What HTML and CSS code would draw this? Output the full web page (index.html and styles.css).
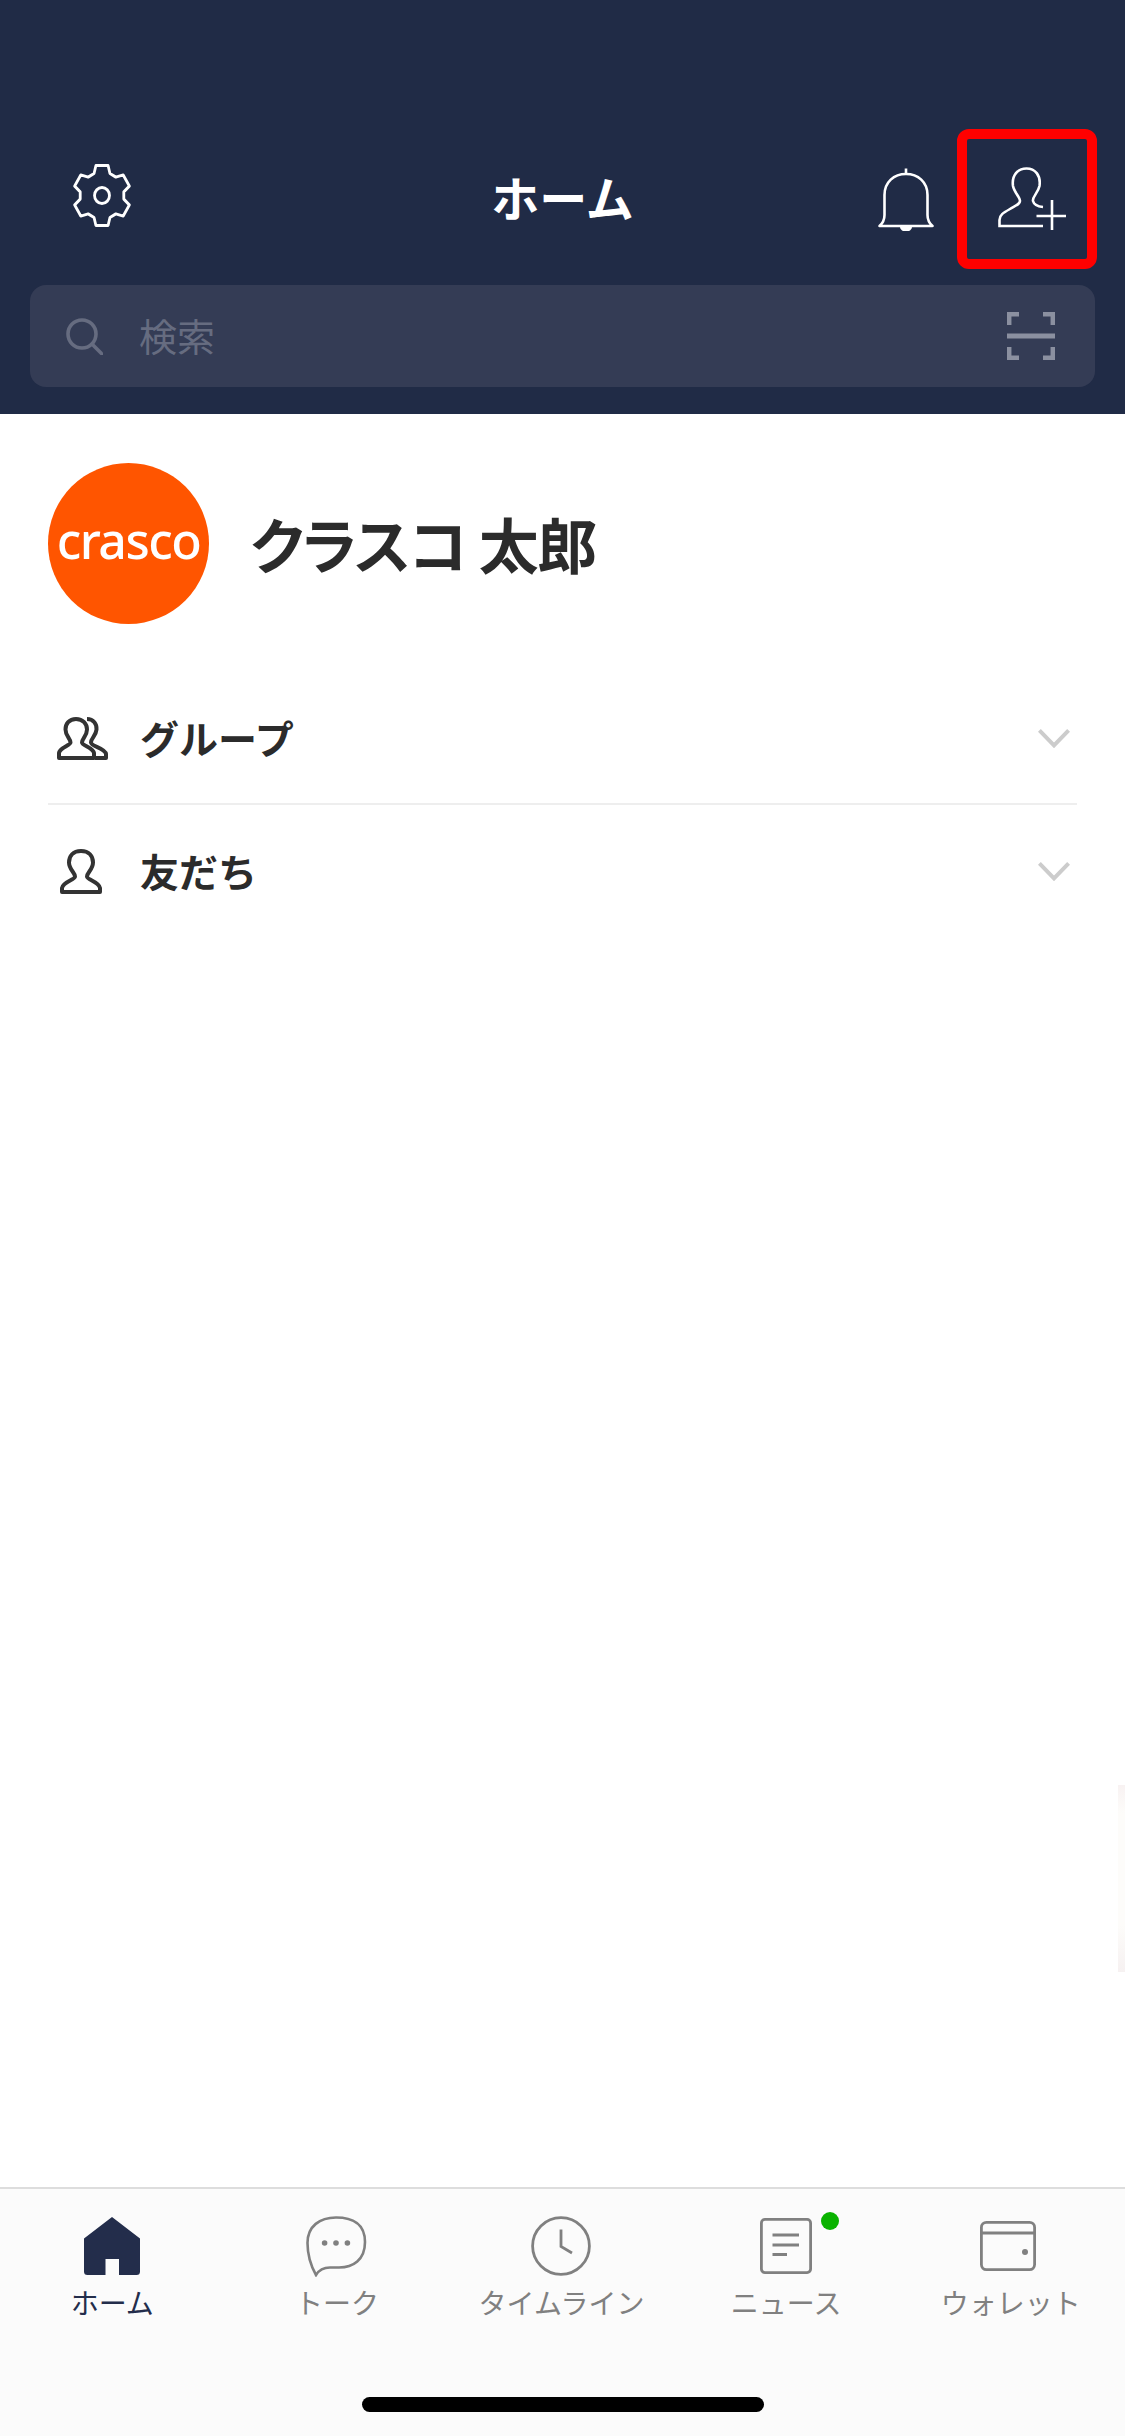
FILE: index.html
```html
<!DOCTYPE html>
<html lang="ja">
<head>
    <meta charset="UTF-8">
    <meta name="viewport" content="width=device-width, initial-scale=1.0">
    <title>ホーム</title>
    <link rel="stylesheet" href="styles.css">
</head>
<body>
    <header class="header">
        <div class="toolbar">
            <div class="toolbar-left">
                <svg class="icon-gear" viewBox="-31 -31.5 62 63" preserveAspectRatio="none" fill="none" stroke="#fff" stroke-width="3" stroke-linejoin="round">
                    <polygon points="-8.5,-22 -6.5,-30 6.5,-30 8.5,-22 14.8,-18.4 22.7,-20.6 29.2,-9.4 23.3,-3.6 23.3,3.6 29.2,9.4 22.7,20.6 14.8,18.4 8.5,22 6.5,30 -6.5,30 -8.5,22 -14.8,18.4 -22.7,20.6 -29.2,9.4 -23.3,3.6 -23.3,-3.6 -29.2,-9.4 -22.7,-20.6 -14.8,-18.4"/>
                    <circle cx="0" cy="0" r="8"/>
                </svg>
            </div>
            <h1 class="title">ホーム</h1>
            <div class="toolbar-right">
                <svg class="icon-bell" viewBox="0 0 56 63" fill="none" stroke="#fff" stroke-width="2.6" stroke-linejoin="round">
                    <path d="M1.5 58C5 55 6.5 52 6.5 47V27C6.5 14 16 6 28 6C40 6 49.5 14 49.5 27V47C49.5 52 51 55 54.5 58Z"/>
                    <path d="M28 0.5V6"/>
                    <path d="M22 59a6 4.5 0 0 0 12 0z" fill="#fff" stroke="none"/>
                </svg>
                <div class="add-friend">
                    <svg class="icon-add" viewBox="0 0 69 64" fill="none" stroke="#fff" stroke-width="2.6">
                        <path d="M45 40C40 39.5 36 38 35 34C34 30 40 26 41.5 19C43 8 37 1.5 28.5 1.5C20 1.5 13.5 8 15 19C16 25 22 30 22 34C22 37 18 38.5 12 42C5 46 1.5 48 1.5 53V59H45"/>
                        <path d="M38.5 49H68M54 33V63"/>
                    </svg>
                </div>
            </div>
        </div>
        <div class="search">
            <svg class="icon-search" viewBox="0 0 37 37" fill="none" stroke="#666c80" stroke-width="3.6">
                <circle cx="16" cy="16" r="14"/>
                <path d="M26 26L36 36" stroke-linecap="round"/>
            </svg>
            <span class="search-text">検索</span>
            <svg class="icon-scan" viewBox="0 0 48 48" fill="none" stroke="#8b90a0" stroke-width="4.5">
                <path d="M12 2.2H2.2V13M36 2.2H45.8V13M12 45.8H2.2V35M36 45.8H45.8V35"/>
                <path d="M0 24H48" stroke-width="5"/>
            </svg>
        </div>
    </header>

    <main class="content">
        <div class="profile">
            <div class="avatar">crasco</div>
            <div class="name">クラスコ 太郎</div>
        </div>
        <div class="list">
            <div class="row">
                <div class="row-icon">
                    <svg class="icon-group" viewBox="0 0 51 43" fill="none" stroke="#333" stroke-width="4" stroke-linejoin="round">
                        <path d="M19 2C12 2 8.5 7 8.5 12.5C8.5 19 13.5 21.5 13.5 25.5C13.5 28.5 2.5 30.5 2 36V41H37V36C36 30.5 25 28.5 25 25.5C25 21.5 30 19 30 12.5C30 7 26 2 19 2Z"/>
                        <path d="M30 2C36.5 2 40 7 39.5 12.5C39 19 34 21 34 25.5C34 29.5 48.5 31 49 37V41H38"/>
                    </svg>
                </div>
                <span class="row-label">グループ</span>
                <svg class="icon-chevron" viewBox="0 0 32 19" fill="none" stroke="#ccc" stroke-width="4">
                    <path d="M1.4 1.4L16 16.4L30.6 1.4"/>
                </svg>
            </div>
            <div class="row">
                <div class="row-icon">
                    <svg class="icon-friend" viewBox="0 0 42 45" fill="none" stroke="#333" stroke-width="4" stroke-linejoin="round">
                        <path d="M21 2C13 2 9 7 9 13.5C9 20.5 15 23.5 15 27.5C15 31 3 32.5 2 39V43H40V39C39 32.5 27 31 27 27.5C27 23.5 33 20.5 33 13.5C33 7 29 2 21 2Z"/>
                    </svg>
                </div>
                <span class="row-label">友だち</span>
                <svg class="icon-chevron" viewBox="0 0 32 19" fill="none" stroke="#ccc" stroke-width="4">
                    <path d="M1.4 1.4L16 16.4L30.6 1.4"/>
                </svg>
            </div>
        </div>
        <div class="edge-strip"></div>
    </main>

    <nav class="nav">
        <div class="tabs">
            <div class="tab active">
                <div class="tab-icon">
                    <svg class="icon-home" viewBox="0 0 56 58">
                        <path fill="#232d4b" fill-rule="evenodd" d="M28 0L56 21.5V54.5A3.5 3.5 0 0 1 52.5 58H35V42H21.5V58H3.5A3.5 3.5 0 0 1 0 54.5V21.5Z"/>
                    </svg>
                </div>
                <span class="tab-label">ホーム</span>
            </div>
            <div class="tab">
                <div class="tab-icon">
                    <svg class="icon-talk" viewBox="0 0 61 61" fill="none" stroke="#808080" stroke-width="2.6">
                        <path d="M30 1.5C47 1.5 59 8 59 26C59 44 47 51.5 33 51.5H24C17 51.5 13 54 10 59C5 50 1.5 38 1.5 27C1.5 10 14 1.5 30 1.5Z"/>
                        <circle cx="18.6" cy="27" r="2.8" fill="#808080" stroke="none"/>
                        <circle cx="30" cy="27" r="2.8" fill="#808080" stroke="none"/>
                        <circle cx="41.4" cy="27" r="2.8" fill="#808080" stroke="none"/>
                    </svg>
                </div>
                <span class="tab-label">トーク</span>
            </div>
            <div class="tab">
                <div class="tab-icon">
                    <svg class="icon-clock" viewBox="0 0 60 60" fill="none" stroke="#808080" stroke-width="2.8">
                        <circle cx="30" cy="30" r="28.4"/>
                        <path d="M30 13.5V30.5L41 37"/>
                    </svg>
                </div>
                <span class="tab-label">タイムライン</span>
            </div>
            <div class="tab">
                <div class="tab-icon">
                    <svg class="icon-news" viewBox="0 0 52 56" fill="none" stroke="#808080" stroke-width="2.8">
                        <rect x="1.4" y="1.4" width="49.2" height="53.2" rx="3.5"/>
                        <path d="M12.5 17H39M12.5 27H39M12.5 36.5H27"/>
                    </svg>
                    <span class="news-dot"></span>
                </div>
                <span class="tab-label">ニュース</span>
            </div>
            <div class="tab">
                <div class="tab-icon">
                    <svg class="icon-wallet" viewBox="0 0 56 50" fill="none" stroke="#808080" stroke-width="2.8">
                        <rect x="1.4" y="1.4" width="53.2" height="47.2" rx="5"/>
                        <path d="M1.4 12H54.6"/>
                        <circle cx="45" cy="31" r="3" fill="#808080" stroke="none"/>
                    </svg>
                </div>
                <span class="tab-label">ウォレット</span>
            </div>
        </div>
        <div class="home-bar"></div>
    </nav>
</body>
</html>
```

FILE: styles.css
```css
body {
    font-family: "Noto Sans CJK JP", "Noto Sans", sans-serif;
    margin: 0;
    padding: 0;
    width: 1125px;
    height: 2436px;
    display: flex;
    flex-direction: column;
    background-color: #fff;
    overflow: hidden;
}

.header {
    height: 414px;
    box-sizing: border-box;
    padding: 129px 30px 0 30px;
    background-color: #202b46;
}

.toolbar {
    display: grid;
    grid-template-columns: 1fr auto 1fr;
    align-items: center;
    height: 140px;
    margin-right: -2px;
}

.toolbar-left {
    padding-left: 43px;
    display: flex;
    padding-bottom: 8px;
}

.icon-gear {
    width: 58px;
    height: 63px;
}

.title {
    margin: 0 2px 7px 0;
    font-size: 48px;
    font-weight: 700;
    line-height: 60px;
    color: #fff;
}

.toolbar-right {
    display: flex;
    align-items: center;
    justify-content: flex-end;
}

.icon-bell {
    width: 56px;
    height: 63px;
    margin-right: 23px;
}

.add-friend {
    width: 140px;
    height: 140px;
    box-sizing: border-box;
    border: 10px solid #ff0000;
    border-radius: 12px;
    display: flex;
    padding: 28px 0 0 31px;
}

.icon-add {
    width: 69px;
    height: 64px;
}

.search {
    display: flex;
    align-items: center;
    height: 102px;
    margin-top: 16px;
    padding: 0 40px 0 36px;
    background-color: #343c55;
    border-radius: 16px;
}

.icon-search {
    width: 37px;
    height: 37px;
}

.search-text {
    flex: 1;
    margin-left: 36px;
    padding-bottom: 2px;
    font-size: 38px;
    line-height: 50px;
    color: #666c80;
}

.icon-scan {
    width: 48px;
    height: 48px;
}

.content {
    flex: 1;
    position: relative;
    padding: 49px 48px 0 48px;
}

.profile {
    display: flex;
    align-items: center;
}

.avatar {
    width: 161px;
    height: 161px;
    box-sizing: border-box;
    padding-bottom: 8px;
    border-radius: 50%;
    background-color: #ff5500;
    color: #fff;
    font-family: "Noto Sans", sans-serif;
    font-size: 50px;
    font-weight: 500;
    letter-spacing: -1.5px;
    display: flex;
    align-items: center;
    justify-content: center;
}

.name {
    margin-left: 41px;
    padding-bottom: 2px;
    font-size: 60px;
    font-weight: 700;
    font-feature-settings: "palt";
    letter-spacing: -1.5px;
    line-height: 80px;
    color: #2b2b2b;
}

.list {
    margin-top: 49px;
}

.row {
    display: flex;
    align-items: center;
    height: 132px;
    box-sizing: border-box;
    padding-right: 7px;
    border-bottom: 2px solid #eee;
}

.row:last-child {
    border-bottom: none;
}

.row-icon {
    width: 69px;
    margin-right: 23px;
    display: flex;
    justify-content: center;
}

.icon-group {
    width: 51px;
    height: 43px;
}

.icon-friend {
    width: 42px;
    height: 45px;
    margin-left: -3px;
}

.row-label {
    flex: 1;
    padding-bottom: 2px;
    font-size: 39px;
    font-weight: 700;
    line-height: 52px;
    color: #2b2b2b;
}

.icon-chevron {
    width: 32px;
    height: 19px;
}

.edge-strip {
    position: absolute;
    right: 0;
    top: 1371px;
    width: 7px;
    height: 187px;
    background: linear-gradient(#f8f2f2, #fdfcfa 15%, #fdfcfa 75%, #f6f1f1);
}

.nav {
    height: 249px;
    box-sizing: border-box;
    border-top: 2px solid #ddd;
    background-color: #fbfbfb;
}

.tabs {
    display: grid;
    grid-template-columns: repeat(5, 1fr);
    padding: 26px 2px 0 0;
}

.tab {
    display: flex;
    flex-direction: column;
    align-items: center;
}

.tab-icon {
    position: relative;
    height: 62px;
    display: flex;
    align-items: center;
}

.tab-label {
    margin-top: 7px;
    font-size: 28px;
    line-height: 36px;
    color: #808080;
}

.tab.active .tab-label {
    color: #232d4b;
}

.icon-home {
    width: 56px;
    height: 58px;
}

.icon-talk {
    width: 61px;
    height: 61px;
}

.icon-clock {
    width: 60px;
    height: 60px;
}

.icon-news {
    width: 52px;
    height: 56px;
}

.icon-wallet {
    width: 56px;
    height: 50px;
    margin-right: 5px;
}

.news-dot {
    position: absolute;
    top: -3px;
    right: -27px;
    width: 18px;
    height: 18px;
    border-radius: 50%;
    background-color: #0ab300;
}

.home-bar {
    width: 402px;
    height: 15px;
    margin: 77px auto 0 auto;
    border-radius: 8px;
    background-color: #000;
}
```
